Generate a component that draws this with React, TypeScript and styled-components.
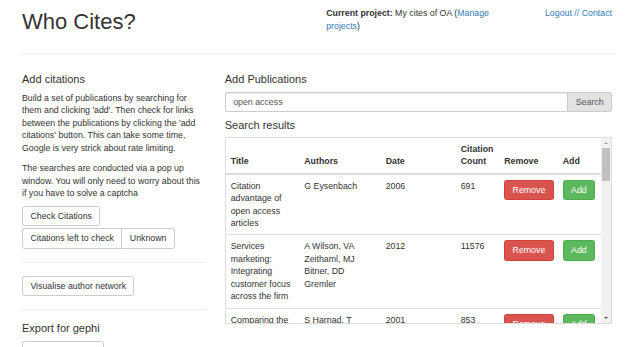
import React from 'react';
import styled, { createGlobalStyle } from 'styled-components';

const GlobalStyle = createGlobalStyle`
  * { box-sizing: border-box; }
  html, body { margin: 0; padding: 0; background: #fff; }
  body {
    font-family: "Liberation Sans", Arial, sans-serif;
    font-size: 8.8px;
    line-height: 12.5px;
    color: #333;
  }
`;

const Page = styled.div`
  width: 590px;
  margin-left: 22px;
`;

const Header = styled.header`
  display: grid;
  grid-template-columns: 285.8px 184.4px 83px;
  column-gap: 18.4px;
  align-items: start;
  padding-top: 7.4px;
`;

const Title = styled.h1`
  margin: 2.9px 0 0;
  font-size: 22px;
  line-height: 24.2px;
  font-weight: 400;
`;

const ProjectInfo = styled.div``;

const UserLinks = styled.div`
  text-align: right;
`;

const Link = styled.a`
  color: #337ab7;
  text-decoration: none;
`;

const Rule = styled.hr<{ $top: number; $bottom: number; $over?: number }>`
  align-self: stretch;
  height: 0;
  margin: ${p => p.$top}px ${p => -(p.$over ?? 0)}px ${p => p.$bottom}px 0;
  border: 0;
  border-top: 1px solid #eee;
`;

const Main = styled.main`
  display: grid;
  grid-template-columns: 184.4px 387.2px;
  column-gap: 18.4px;
  align-items: start;
`;

const Column = styled.section`
  display: flex;
  flex-direction: column;
  align-items: flex-start;
`;

const Wide = styled.section`
  display: flex;
  flex-direction: column;
`;

const SectionTitle = styled.h4<{ $top?: number }>`
  margin: ${p => p.$top ?? 0}px 0 6.2px;
  font-size: 11px;
  line-height: 12.1px;
  font-weight: 400;
`;

const Text = styled.p<{ $bottom: number }>`
  margin: 0 0 ${p => p.$bottom}px;
`;

const Button = styled.button`
  font: inherit;
  color: #333;
  background: #fff;
  border: 1px solid #ccc;
  border-radius: 2.5px;
  padding: 3px 7.4px;
  white-space: nowrap;
  cursor: pointer;
`;

const ButtonGroup = styled.div`
  display: flex;
  margin-top: 2.1px;

  & > ${Button}:not(:first-child) {
    margin-left: -1px;
    border-top-left-radius: 0;
    border-bottom-left-radius: 0;
  }
  & > ${Button}:not(:last-child) {
    border-top-right-radius: 0;
    border-bottom-right-radius: 0;
  }
`;

const InputGroup = styled.div`
  display: flex;
  height: 20.5px;
`;

const SearchInput = styled.input`
  flex: 1;
  min-width: 0;
  height: 100%;
  font: inherit;
  color: #555;
  padding: 0 7.4px;
  border: 1px solid #ccc;
  border-right: 0;
  border-radius: 2.5px 0 0 2.5px;
  box-shadow: inset 0 1px 1px rgba(0, 0, 0, 0.075);
  outline: none;
`;

const SearchButton = styled.button`
  font: inherit;
  color: #555;
  background: #e3e3e3;
  border: 1px solid #ccc;
  border-radius: 0 2.5px 2.5px 0;
  padding: 0 7.4px;
`;

const ResultsBox = styled.div`
  display: flex;
  height: 187.6px;
  border: 1px solid #ddd;
  overflow: hidden;
`;

const Viewport = styled.div`
  flex: 1;
  min-width: 0;
  overflow: hidden;
`;

/* the page is shot with scrollbars hidden, so the bar is drawn */
const ScrollBar = styled.div`
  width: 10px;
  flex: none;
  display: flex;
  flex-direction: column;
  align-items: center;
  background: #f1f1f1;
`;

const ScrollArrow = styled.div<{ $dir: 'up' | 'down' }>`
  height: 10px;
  width: 100%;
  display: flex;
  align-items: center;
  justify-content: center;

  &::after {
    content: '';
    width: 0;
    height: 0;
    border-left: 2.5px solid transparent;
    border-right: 2.5px solid transparent;
    ${p =>
      p.$dir === 'up'
        ? 'border-bottom: 2.5px solid #a3a3a3;'
        : 'border-top: 2.5px solid #505050;'}
  }
`;

const ScrollThumb = styled.div`
  width: 8.5px;
  height: 33px;
  margin-top: 0.5px;
  background: #c1c1c1;
`;

const ScrollSpace = styled.div`
  flex: 1;
`;

const Table = styled.table`
  width: 100%;
  table-layout: fixed;
  border-collapse: collapse;
`;

const Col = styled.col<{ $w?: number }>`
  width: ${p => (p.$w ? `${p.$w}px` : 'auto')};
`;

const Th = styled.th`
  text-align: left;
  vertical-align: bottom;
  padding: 4.9px;
  font-weight: 700;
  border-bottom: 2px solid #ddd;
`;

const Td = styled.td`
  vertical-align: top;
  padding: 4.9px;
  border-top: 1px solid #ddd;
`;

const ActionButton = styled.button<{ $tone: 'danger' | 'success' }>`
  font: inherit;
  color: #fff;
  background: ${p => (p.$tone === 'danger' ? '#d9534f' : '#5cb85c')};
  border: 1px solid ${p => (p.$tone === 'danger' ? '#d43f3a' : '#4cae4c')};
  border-radius: 2.5px;
  padding: 3px 7.4px;
  white-space: nowrap;
`;

const publications = [
  { title: 'Citation advantage of open access articles', authors: 'G Eysenbach', year: 2006, count: 691 },
  { title: 'Services marketing: Integrating customer focus across the firm', authors: 'A Wilson, VA Zeithaml, MJ Bitner, DD Gremler', year: 2012, count: 11576 },
  { title: 'Comparing the impact of open access (OA) vs. non-OA articles in the same journals', authors: 'S Harnad, T Brody', year: 2001, count: 853 },
  { title: "Free online availability substantially increases a paper's impact", authors: 'S Lawrence', year: 2001, count: 1204 },
  { title: 'Do open access articles have a greater research impact?', authors: 'K Antelman', year: 2004, count: 703 },
];

export default function App() {
  return (
    <>
      <GlobalStyle />
      <Page>
        <Header>
          <Title>Who Cites?</Title>
          <ProjectInfo>
            <strong>Current project:</strong> My cites of OA (<Link href="#">Manage projects</Link>)
          </ProjectInfo>
          <UserLinks>
            <Link href="#">Logout // Contact</Link>
          </UserLinks>
        </Header>
        <Rule $top={18.5} $bottom={19.4} $over={3} />
        <Main>
          <Column>
            <SectionTitle>Add citations</SectionTitle>
            <Text $bottom={8}>
              Build a set of publications by searching for them and clicking 'add'. Then check for links
              between the publications by clicking the 'add citations' button. This can take some time,
              Google is very strick about rate limiting.
            </Text>
            <Text $bottom={6.1}>
              The searches are conducted via a pop up window. You will only need to worry about this if you
              have to solve a captcha
            </Text>
            <Button>Check Citations</Button>
            <ButtonGroup>
              <Button>Citations left to check</Button>
              <Button>Unknown</Button>
            </ButtonGroup>
            <Rule $top={12.7} $bottom={13.2} />
            <Button>Visualise author network</Button>
            <Rule $top={12.8} $bottom={12.3} />
            <SectionTitle>Export for gephi</SectionTitle>
            <Button>Download GEXF</Button>
          </Column>
          <Wide>
            <SectionTitle>Add Publications</SectionTitle>
            <InputGroup>
              <SearchInput defaultValue="open access" />
              <SearchButton>Search</SearchButton>
            </InputGroup>
            <SectionTitle $top={6.4}>Search results</SectionTitle>
            <ResultsBox>
              <Viewport>
                <Table>
                  <colgroup>
                    <Col $w={73.6} />
                    <Col $w={81.4} />
                    <Col $w={75} />
                    <Col $w={43.5} />
                    <Col $w={58.5} />
                    <Col />
                  </colgroup>
                  <thead>
                    <tr>
                      <Th>Title</Th>
                      <Th>Authors</Th>
                      <Th>Date</Th>
                      <Th>Citation Count</Th>
                      <Th>Remove</Th>
                      <Th>Add</Th>
                    </tr>
                  </thead>
                  <tbody>
                    {publications.map(pub => (
                      <tr key={pub.title}>
                        <Td>{pub.title}</Td>
                        <Td>{pub.authors}</Td>
                        <Td>{pub.year}</Td>
                        <Td>{pub.count}</Td>
                        <Td>
                          <ActionButton $tone="danger">Remove</ActionButton>
                        </Td>
                        <Td>
                          <ActionButton $tone="success">Add</ActionButton>
                        </Td>
                      </tr>
                    ))}
                  </tbody>
                </Table>
              </Viewport>
              <ScrollBar>
                <ScrollArrow $dir="up" />
                <ScrollThumb />
                <ScrollSpace />
                <ScrollArrow $dir="down" />
              </ScrollBar>
            </ResultsBox>
          </Wide>
        </Main>
      </Page>
    </>
  );
}
